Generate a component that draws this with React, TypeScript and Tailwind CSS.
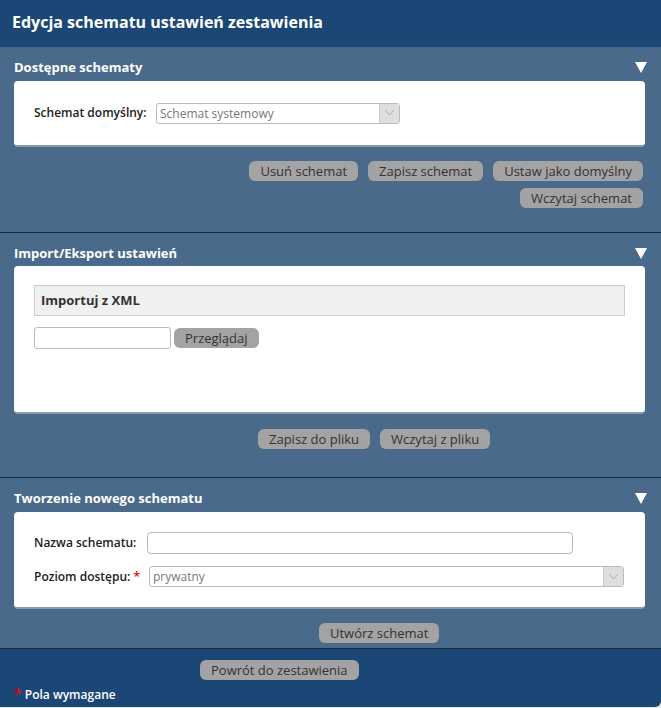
import React from 'react';

const font = { fontFamily: '"Open Sans", "DejaVu Sans", sans-serif' };

function Btn({ children, className = '' }: { children: React.ReactNode; className?: string }) {
  return (
    <button
      className={`h-[20px] rounded-[6px] bg-[#a3a3a3] px-[11px] text-[13px] leading-[20px] text-[#333] ${className}`}
    >
      {children}
    </button>
  );
}

function SectionHead({ title }: { title: string }) {
  return (
    <div className="flex items-center justify-between px-[14px] pt-[11px] pb-[4px]">
      <h2 className="text-[13px] font-bold leading-[18px] text-white">{title}</h2>
      <svg width="12" height="11" viewBox="0 0 12 11">
        <polygon points="0,0 12,0 6,11" fill="#fff" />
      </svg>
    </div>
  );
}

function SelectBox({ value, className = '' }: { value: string; className?: string }) {
  return (
    <div className={`flex h-[21px] items-stretch rounded-[3px] border border-[#bbb] bg-white ${className}`}>
      <span className="flex-1 truncate pl-[3px] text-[12px] leading-[19px] text-[#777]">{value}</span>
      <span className="flex w-[20px] items-center justify-center border-l border-[#ccc] bg-[#dedede]">
        <svg width="9" height="6" viewBox="0 0 9 6">
          <polyline points="0.5,0.5 4.5,5 8.5,0.5" fill="none" stroke="#aaa" strokeWidth="1" />
        </svg>
      </span>
    </div>
  );
}

export default function App() {
  return (
    <div className="h-[708px] w-[661px] bg-[#e6e6e6]" style={font}>
      <div className="overflow-hidden rounded-br-[6px]">
        <div className="flex h-[47px] items-center bg-[#1a4775] px-[12px] pb-[4px]">
          <h1 className="text-[16px] font-bold text-white">Edycja schematu ustawień zestawienia</h1>
        </div>

        {/* Dostępne schematy */}
        <section className="h-[186px] border-b border-[#1f2b38] bg-[#4a6a8c]">
          <SectionHead title="Dostępne schematy" />
          <div className="mx-[14px] mt-[1px] mr-[16px] flex h-[66px] items-center rounded-[4px] border-b-2 border-[#8a9aa8] bg-white px-[20px]">
            <span className="w-[122px] text-[12px] font-semibold text-[#222]">Schemat domyślny:</span>
            <SelectBox value="Schemat systemowy" className="w-[244px]" />
          </div>
          <div className="mr-[18px] mt-[14px] flex flex-col items-end gap-[7px]">
            <div className="flex gap-[10px]">
              <Btn>Usuń schemat</Btn>
              <Btn>Zapisz schemat</Btn>
              <Btn>Ustaw jako domyślny</Btn>
            </div>
            <Btn>Wczytaj schemat</Btn>
          </div>
        </section>

        {/* Import/Eksport */}
        <section className="h-[245px] border-b border-[#1f2b38] bg-[#4a6a8c]">
          <SectionHead title="Import/Eksport ustawień" />
          <div className="mx-[14px] mr-[16px] h-[148px] rounded-[4px] border-b-2 border-[#8a9aa8] bg-white px-[20px] pt-[19px]">
            <div className="flex h-[31px] items-center border border-[#ccc] bg-[#f0f0f0] px-[6px] text-[13px] font-bold text-[#333]">
              Importuj z XML
            </div>
            <div className="mt-[11px] flex items-center gap-[3px]">
              <input className="h-[22px] w-[137px] rounded-[3px] border border-[#bbb] bg-white" />
              <Btn className="bg-[#a0a0a0]">Przeglądaj</Btn>
            </div>
          </div>
          <div className="mt-[15px] flex gap-[10px] pl-[258px]">
            <Btn>Zapisz do pliku</Btn>
            <Btn>Wczytaj z pliku</Btn>
          </div>
        </section>

        {/* Tworzenie */}
        <section className="h-[171px] border-b border-[#1f2b38] bg-[#4a6a8c]">
          <SectionHead title="Tworzenie nowego schematu" />
          <div className="mx-[14px] mt-[1px] mr-[16px] flex h-[97px] flex-col justify-center gap-[12px] rounded-[4px] border-b-2 border-[#8a9aa8] bg-white px-[20px]">
            <div className="flex items-center">
              <span className="w-[113px] text-[12px] font-semibold text-[#222]">Nazwa schematu:</span>
              <input className="h-[22px] w-[426px] rounded-[4px] border border-[#bbb] bg-white" />
            </div>
            <div className="flex items-center">
              <span className="w-[115px] text-[12px] font-semibold text-[#222]">
                Poziom dostępu: <span className="text-[#e00]">*</span>
              </span>
              <SelectBox value="prywatny" className="w-[475px]" />
            </div>
          </div>
          <div className="mt-[14px] flex pl-[319px]">
            <Btn>Utwórz schemat</Btn>
          </div>
        </section>

        <footer className="h-[58px] bg-[#1a4775] px-[14px] pt-[11px]">
          <div className="flex pl-[186px]">
            <Btn>Powrót do zestawienia</Btn>
          </div>
          <p className="mt-[3px] text-[12px] font-semibold text-white">
            <span className="text-[14px] text-[#e00]">*</span> Pola wymagane
          </p>
        </footer>
      </div>
    </div>
  );
}
